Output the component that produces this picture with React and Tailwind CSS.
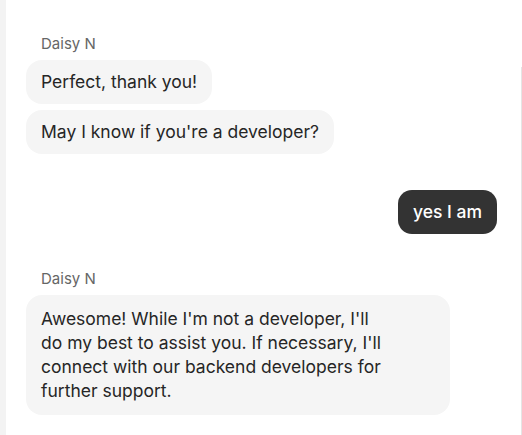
import React from 'react';

const font = { fontFamily: 'Inter, "Noto Sans", sans-serif' };

const Bubble = ({ children, className = '' }) => (
  <div className={`bg-[#f5f5f5] text-[#262626] text-[17.5px] leading-6 rounded-2xl px-[15px] ${className}`}>
    {children}
  </div>
);

const App = () => {
  return (
    <div className="w-[522px] h-[435px] bg-white flex overflow-hidden" style={font}>
      <div className="w-[6px] h-full bg-[#f3f3f3]" />
      <div className="flex-1 flex flex-col pl-5 pr-[24px] pt-[34px]">
        {/* agent messages */}
        <div className="text-[15px] leading-5 text-[#666] pl-[15px]">Daisy N</div>
        <div className="flex flex-col items-start gap-[6px] mt-[6px]">
          <Bubble className="py-[10px]">Perfect, thank you!</Bubble>
          <Bubble className="py-[10px]">May I know if you're a developer?</Bubble>
        </div>

        {/* my reply */}
        <div className="flex justify-end mt-[36px]">
          <div className="bg-[#333333] text-white text-[17.5px] leading-6 font-medium rounded-[14px] px-[15px] py-[10px]">
            yes I am
          </div>
        </div>

        <div className="text-[15px] leading-5 text-[#666] pl-[15px] mt-[35px]">Daisy N</div>
        <div className="flex flex-col items-start mt-[6px]">
          <Bubble className="w-[424px] py-[12px]">
            <p className="max-w-[350px]">
              Awesome! While I'm not a developer, I'll do my best to assist you. If necessary, I'll connect with our backend developers for further support.
            </p>
          </Bubble>
        </div>
      </div>
      <div className="w-px h-full flex flex-col">
        <div className="h-[67px]" />
        <div className="flex-1 bg-[#e5e5e5]" />
      </div>
    </div>
  );
};

export default App;
